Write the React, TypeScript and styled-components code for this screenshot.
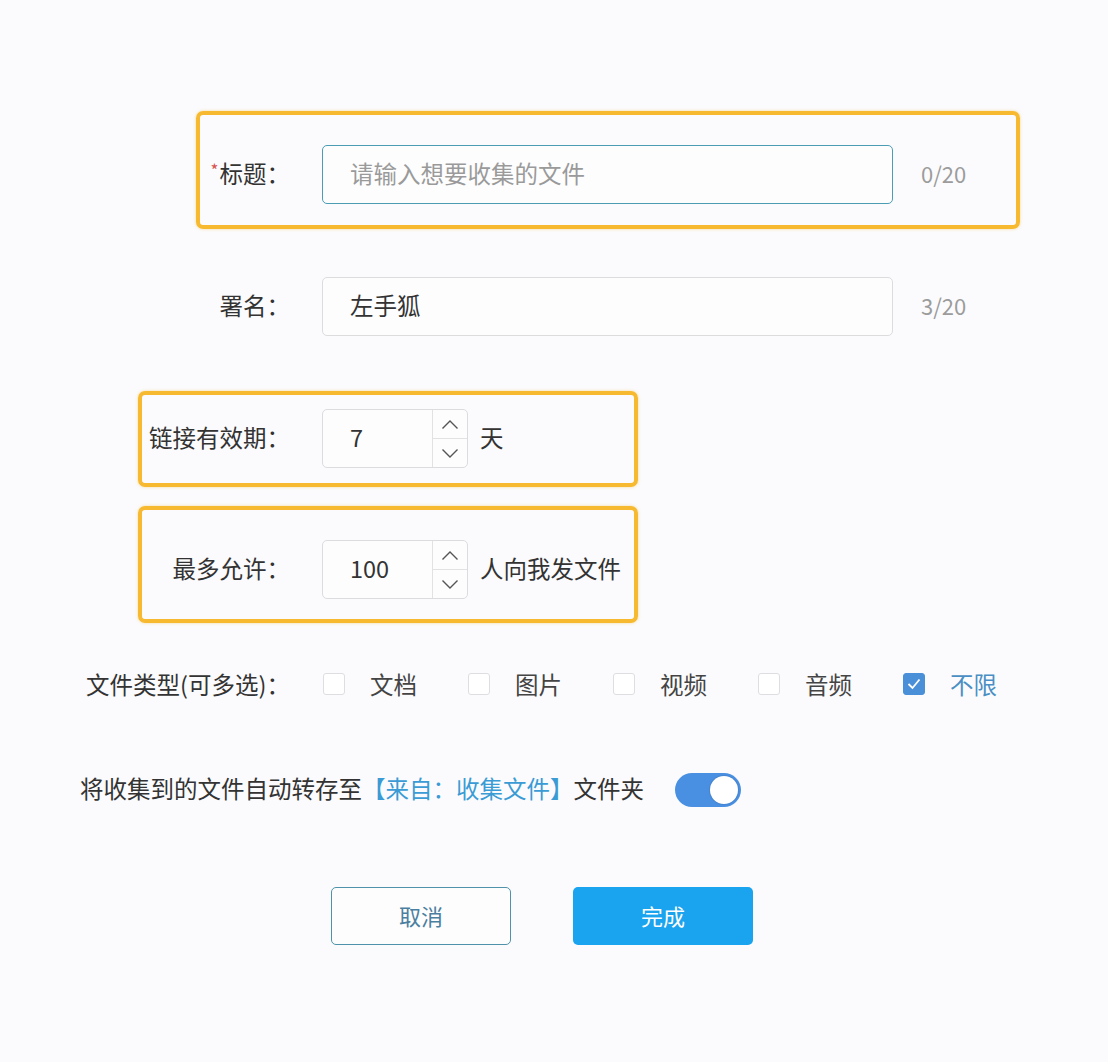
import React from "react";
import styled, { createGlobalStyle } from "styled-components";

const Global = createGlobalStyle`
  html, body { margin: 0; padding: 0; background: #fbfbfd; }
  body { font-family: "Noto Sans CJK SC", "Liberation Sans", sans-serif; color: #333; }
  * { box-sizing: border-box; }
`;

const Page = styled.div`
  width: 1108px;
  min-height: 1062px;
  padding-top: 111px;
  display: flex;
  flex-direction: column;
  align-items: flex-start;
`;

const Highlight = styled.div<{ $left: number; $width: number; $pt: number; $pb: number; $mt: number }>`
  margin-left: ${(p) => p.$left}px;
  margin-top: ${(p) => p.$mt}px;
  width: ${(p) => p.$width}px;
  border: 4px solid #f6b930;
  border-radius: 7px;
  padding: ${(p) => p.$pt}px 0 ${(p) => p.$pb}px;
  box-shadow: 0 0 3px rgba(246, 185, 48, 0.5);
`;

const Row = styled.div<{ $mt?: number }>`
  display: flex;
  align-items: center;
  margin-top: ${(p) => p.$mt ?? 0}px;
`;

const Label = styled.div<{ $w: number }>`
  width: ${(p) => p.$w}px;
  flex-shrink: 0;
  text-align: right;
  font-size: 23.5px;
  line-height: 30px;
  padding-bottom: 4px;
  color: #333;
  white-space: nowrap;
  margin-right: 32px;
`;

const Star = styled.span`
  color: #d9534f;
  font-size: 17px;
  line-height: 17px;
  vertical-align: 6px;
  margin-right: 1px;
`;

const TextInput = styled.div<{ $focus?: boolean; $placeholder?: boolean }>`
  width: 571px;
  height: 59px;
  border: 1px solid ${(p) => (p.$focus ? "#4a9db3" : "#dcdcdf")};
  border-radius: 5px;
  background: #fdfdfe;
  padding: 0 0 4px 27px;
  display: flex;
  align-items: center;
  font-size: 23.5px;
  color: ${(p) => (p.$placeholder ? "#9a9a9a" : "#333")};
`;

const Counter = styled.span`
  margin-left: 28px;
  padding-bottom: 4px;
  font-size: 22px;
  color: #9c9c9c;
`;

const NumberBox = styled.div`
  width: 146px;
  height: 59px;
  border: 1px solid #dcdcdf;
  border-radius: 5px;
  background: #fdfdfe;
  display: flex;
`;

const NumberValue = styled.div`
  flex: 1;
  padding: 0 0 3px 27px;
  display: flex;
  align-items: center;
  font-size: 23.5px;
  color: #333;
`;

const Spinner = styled.div`
  width: 35px;
  border-left: 1px solid #e2e2e5;
  display: flex;
  flex-direction: column;
`;

const SpinBtn = styled.div<{ $top?: boolean }>`
  flex: 1;
  display: flex;
  align-items: center;
  justify-content: center;
  border-bottom: ${(p) => (p.$top ? "1px solid #e2e2e5" : "none")};
`;

const Unit = styled.span`
  margin-left: 12px;
  padding-bottom: 4px;
  font-size: 23.5px;
  color: #333;
  white-space: nowrap;
`;

const Options = styled.div`
  display: flex;
  margin-left: 1px;
`;

const Option = styled.div`
  width: 145px;
  display: flex;
  align-items: center;
  gap: 25px;
`;

const Box = styled.span<{ $checked?: boolean }>`
  width: 22px;
  height: 22px;
  margin-top: -4px;
  border-radius: 3px;
  border: 1px solid ${(p) => (p.$checked ? "#4a90d9" : "#dedee2")};
  background: ${(p) => (p.$checked ? "#4a90d9" : "#fff")};
  display: flex;
  align-items: center;
  justify-content: center;
`;

const OptText = styled.span<{ $checked?: boolean }>`
  font-size: 23.5px;
  line-height: 30px;
  padding-bottom: 4px;
  color: ${(p) => (p.$checked ? "#4a8fc4" : "#444")};
`;

const AutoRow = styled.div`
  margin-left: 80px;
  margin-top: 68px;
  display: flex;
  align-items: center;
  font-size: 23.5px;
  color: #333;
`;

const AutoText = styled.span`
  padding-bottom: 3px;
  white-space: nowrap;
`;

const LinkText = styled.span`
  color: #3a9bd5;
`;

const Toggle = styled.div`
  margin-left: 31px;
  width: 66px;
  height: 34px;
  border-radius: 17px;
  background: #4a90e2;
  display: flex;
  align-items: center;
  justify-content: flex-end;
  padding-right: 3px;
`;

const Knob = styled.span`
  width: 28px;
  height: 28px;
  border-radius: 50%;
  background: #fff;
  box-shadow: 0 0 2px rgba(0, 0, 0, 0.25);
`;

const Buttons = styled.div`
  margin-top: 79px;
  margin-left: 331px;
  display: flex;
  gap: 62px;
`;

const Button = styled.button<{ $primary?: boolean }>`
  width: 180px;
  height: 58px;
  border-radius: 5px;
  font-family: inherit;
  font-size: 22px;
  padding-bottom: 4px;
  cursor: pointer;
  border: ${(p) => (p.$primary ? "none" : "1.5px solid #4f93ab")};
  background: ${(p) => (p.$primary ? "#1aa3ee" : "#fdfdfe")};
  color: ${(p) => (p.$primary ? "#fff" : "#4b7f9f")};
`;

const Chevron = ({ up }: { up?: boolean }) => (
  <svg width="18" height="11" viewBox="0 0 18 11">
    <polyline
      points={up ? "1.5,9.5 9,2 16.5,9.5" : "1.5,1.5 9,9 16.5,1.5"}
      fill="none"
      stroke="#555"
      strokeWidth="1.4"
    />
  </svg>
);

const Check = () => (
  <svg width="14" height="12" viewBox="0 0 14 12">
    <polyline points="1.5,6 5.5,10 12.5,1.5" fill="none" stroke="#fff" strokeWidth="1.8" />
  </svg>
);

const NumberField = ({ value }: { value: string }) => (
  <NumberBox>
    <NumberValue>{value}</NumberValue>
    <Spinner>
      <SpinBtn $top>
        <Chevron up />
      </SpinBtn>
      <SpinBtn>
        <Chevron />
      </SpinBtn>
    </Spinner>
  </NumberBox>
);

const types = [
  { t: "文档", c: false },
  { t: "图片", c: false },
  { t: "视频", c: false },
  { t: "音频", c: false },
  { t: "不限", c: true },
];

export default function App() {
  return (
    <>
      <Global />
      <Page>
        <Highlight $left={196} $width={824} $pt={30} $pb={21} $mt={0}>
          <Row>
            <Label $w={90}>
              <Star>*</Star>标题：
            </Label>
            <TextInput $focus $placeholder>
              请输入想要收集的文件
            </TextInput>
            <Counter>0/20</Counter>
          </Row>
        </Highlight>

        <Row $mt={48}>
          <Label $w={290}>署名：</Label>
          <TextInput>左手狐</TextInput>
          <Counter>3/20</Counter>
        </Row>

        <Highlight $left={138} $width={500} $pt={14} $pb={15} $mt={55}>
          <Row>
            <Label $w={148}>链接有效期：</Label>
            <NumberField value="7" />
            <Unit>天</Unit>
          </Row>
        </Highlight>

        <Highlight $left={138} $width={500} $pt={30} $pb={20} $mt={19}>
          <Row>
            <Label $w={148}>最多允许：</Label>
            <NumberField value="100" />
            <Unit>人向我发文件</Unit>
          </Row>
        </Highlight>

        <Row $mt={46}>
          <Label $w={290}>文件类型(可多选)：</Label>
          <Options>
            {types.map((o) => (
              <Option key={o.t}>
                <Box $checked={o.c}>{o.c && <Check />}</Box>
                <OptText $checked={o.c}>{o.t}</OptText>
              </Option>
            ))}
          </Options>
        </Row>

        <AutoRow>
          <AutoText>
            将收集到的文件自动转存至<LinkText>【来自：收集文件】</LinkText>文件夹
          </AutoText>
          <Toggle>
            <Knob />
          </Toggle>
        </AutoRow>

        <Buttons>
          <Button>取消</Button>
          <Button $primary>完成</Button>
        </Buttons>
      </Page>
    </>
  );
}
